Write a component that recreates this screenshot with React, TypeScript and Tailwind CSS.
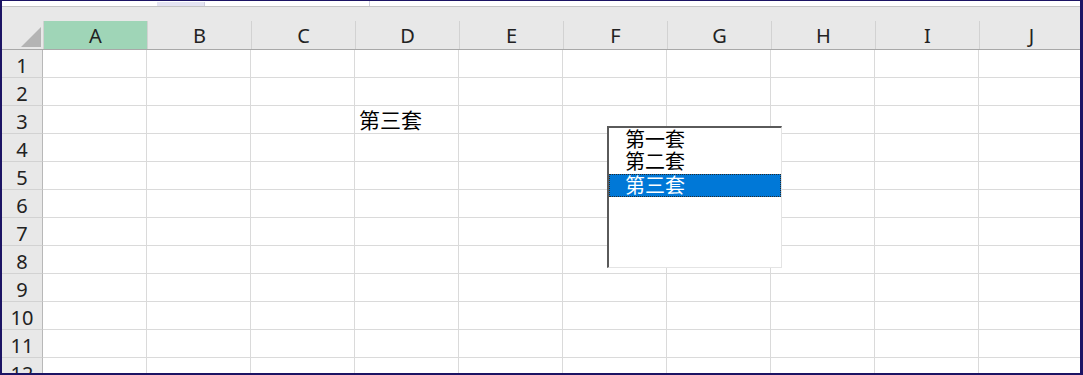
const COLS = ['A', 'B', 'C', 'D', 'E', 'F', 'G', 'H', 'I', 'J'];
const ROWS = [1, 2, 3, 4, 5, 6, 7, 8, 9, 10, 11, 12];

const font = "font-['Noto_Sans','Noto_Sans_CJK_SC',sans-serif]";

// Cell content keyed by "row-col"
const cells: Record<string, string> = { '3-D': '第三套' };

function ListBox() {
  const items = ['第一套', '第二套', '第三套'];
  return (
    <div className="absolute left-[605px] top-[76px] w-[175px] h-[142px] bg-white border-l-2 border-t-2 border-l-[#5a5a5a] border-t-[#5a5a5a] border-r border-b border-r-[#e4e4e4] border-b-[#e4e4e4]">
      <div className="flex flex-col pt-[1px]">
        {items.map((it, i) => {
          const sel = i === 2;
          return (
            <div
              key={it}
              className={
                sel
                  ? 'h-[23px] mt-[1px] bg-[#0078d7] text-white border border-dotted border-[#2a2a2a] pl-[15px] text-[20px] leading-[21px]'
                  : 'h-[22px] pl-[16px] text-[20px] leading-[22px] text-black'
              }
            >
              {it}
            </div>
          );
        })}
      </div>
    </div>
  );
}

export default function App() {
  return (
    <div className={`w-[1083px] h-[375px] overflow-hidden bg-white border-l-2 border-t border-r-[3px] border-b-2 border-[#1c1464] flex flex-col ${font}`}>
      {/* top strip (formula bar remnant) */}
      <div className="h-[6px] bg-white border-b border-[#c4c4c4] flex shrink-0">
        <div className="w-[155px]" />
        <div className="w-[48px] mt-[1px] bg-[#e4e4f2] border-r border-[#d0d0e0]" />
        <div className="w-[165px] border-r border-[#d0d0e0]" />
      </div>

      {/* header band */}
      <div className="h-[43px] bg-[#e8e8e8] flex flex-col shrink-0 border-b border-[#a8a8a8]">
        <div className="h-[14px]" />
        <div className="flex h-[29px]">
          <div className="w-[41px] shrink-0 flex items-end justify-end pr-[2px] pb-[2px]">
            <svg width="20" height="20" viewBox="0 0 20 20">
              <polygon points="20,0 20,20 0,20" fill="#b4b4b4" />
            </svg>
          </div>
          {COLS.map((c) => (
            <div
              key={c}
              className={`w-[104px] shrink-0 border-l border-[#d2d2d2] flex items-center justify-center pt-[3px] text-[20px] leading-none text-[#222] ${
                c === 'A' ? 'bg-[#9fd5b7] text-[#1e4d33]' : ''
              }`}
            >
              {c}
            </div>
          ))}
        </div>
      </div>

      {/* grid body */}
      <div className="relative flex-1 overflow-hidden">
        {ROWS.map((r) => (
          <div key={r} className="flex h-[28px]">
            <div className="w-[41px] shrink-0 bg-[#e8e8e8] border-b border-[#d2d2d2] border-r border-r-[#b8b8b8] flex items-center justify-center pt-[4px] text-[20px] leading-none text-[#222]">
              {r}
            </div>
            {COLS.map((c) => (
              <div
                key={c}
                className="w-[104px] shrink-0 border-r border-b border-[#dadada] flex items-center pl-[4px] pt-[2px] text-[21px] leading-none text-black"
              >
                {cells[`${r}-${c}`] ?? ''}
              </div>
            ))}
          </div>
        ))}
        <ListBox />
      </div>
    </div>
  );
}
